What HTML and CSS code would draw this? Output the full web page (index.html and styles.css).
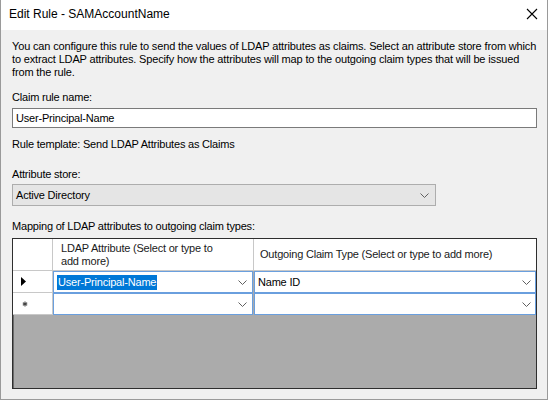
FILE: index.html
```html
<!DOCTYPE html>
<html>
<head>
<meta charset="utf-8">
<link rel="stylesheet" href="styles.css">
</head>
<body>
<div class="window">
  <div class="titlebar">
    <span class="title">Edit Rule - SAMAccountName</span>
    <svg class="close" width="12" height="12" viewBox="0 0 12 12"><path d="M1 1 L11 11 M11 1 L1 11" stroke="#000" stroke-width="1.1" fill="none"/></svg>
  </div>
  <div class="content">
    <p class="desc">You can configure this rule to send the values of LDAP attributes as claims. Select an attribute store from which<br>to extract LDAP attributes. Specify how the attributes will map to the outgoing claim types that will be issued<br>from the rule.</p>
    <div class="lbl lbl-claim">Claim rule name:</div>
    <div class="textbox">User-Principal-Name</div>
    <div class="lbl lbl-template">Rule template: Send LDAP Attributes as Claims</div>
    <div class="lbl lbl-store">Attribute store:</div>
    <div class="combo">
      <span>Active Directory</span>
      <svg class="chev" width="9" height="5" viewBox="0 0 9 5"><path d="M0.5 0.5 L4.5 4.5 L8.5 0.5" stroke="#606060" fill="none"/></svg>
    </div>
    <div class="lbl lbl-map">Mapping of LDAP attributes to outgoing claim types:</div>
    <div class="grid">
      <div class="corner"></div>
      <div class="hcell h1">LDAP Attribute (Select or type to<br>add more)</div>
      <div class="hcell h2">Outgoing Claim Type (Select or type to add more)</div>

      <div class="rowhead">
        <svg width="5" height="9" viewBox="0 0 5 9"><path d="M0 0 L5 4.5 L0 9 Z" fill="#000"/></svg>
      </div>
      <div class="cell c1"><span class="sel">User-Principal-Name</span><svg class="chev" width="9" height="5" viewBox="0 0 9 5"><path d="M0.5 0.5 L4.5 4.5 L8.5 0.5" stroke="#606060" fill="none"/></svg></div>
      <div class="cell c2"><span class="val">Name ID</span><svg class="chev" width="9" height="5" viewBox="0 0 9 5"><path d="M0.5 0.5 L4.5 4.5 L8.5 0.5" stroke="#606060" fill="none"/></svg></div>

      <div class="rowhead">
        <svg class="star" width="6" height="6" viewBox="0 0 6 6"><path d="M3 0.5 L3 5.5 M0.8 1.7 L5.2 4.3 M5.2 1.7 L0.8 4.3" stroke="#444" stroke-width="1.1" fill="none"/></svg>
      </div>
      <div class="cell c1"><span></span><svg class="chev" width="9" height="5" viewBox="0 0 9 5"><path d="M0.5 0.5 L4.5 4.5 L8.5 0.5" stroke="#606060" fill="none"/></svg></div>
      <div class="cell c2"><span></span><svg class="chev" width="9" height="5" viewBox="0 0 9 5"><path d="M0.5 0.5 L4.5 4.5 L8.5 0.5" stroke="#606060" fill="none"/></svg></div>
    </div>
  </div>
</div>
</body>
</html>
```

FILE: styles.css
```css
* { box-sizing: border-box; }
html, body { margin: 0; padding: 0; }
body {
  font-family: "Liberation Sans", Arial, sans-serif;
  font-size: 11px;
  color: #000;
  background: #fff;
}
.window {
  width: 548px;
  height: 400px;
  border: 1px solid #9a9a9a;
  border-top: none;
  background: #f0f0f0;
  display: flex;
  flex-direction: column;
}
.titlebar {
  height: 30px;
  background: #fff;
  display: flex;
  align-items: center;
  justify-content: space-between;
  padding: 0 8px 2px 8px;
}
.title {
  font-family: "Liberation Sans", Arial, sans-serif;
  font-size: 12px;
  color: #000;
}
.close { margin-right: 1px; }
.content {
  padding: 10px 10px 0 11px;
  display: flex;
  flex-direction: column;
}
.desc {
  margin: 0;
  line-height: 13px;
  letter-spacing: -0.15px;
}
.lbl {
  line-height: 13px;
  letter-spacing: -0.2px;
}
.lbl-claim { margin-top: 12px; }
.lbl-template { margin-top: 10px; }
.lbl-store { margin-top: 17px; }
.lbl-map { margin-top: 14px; }
.textbox {
  margin-top: 4px;
  height: 20px;
  border: 1px solid #7a7a7a;
  background: #fff;
  padding: 0 3px;
  display: flex;
  align-items: center;
  letter-spacing: -0.2px;
}
.combo {
  margin-top: 3px;
  width: 424px;
  height: 22px;
  border: 1px solid #adadad;
  background: #e5e5e5;
  display: flex;
  align-items: center;
  justify-content: space-between;
  padding: 0 6px 0 3px;
  letter-spacing: -0.2px;
}
.grid {
  margin-top: 5px;
  height: 151px;
  border: 1px solid #2e2e2e;
  box-shadow: inset 1px 1px 0 #6a6a6a;
  background: #ababab;
  display: grid;
  grid-template-columns: 40px 201px 1fr;
  grid-template-rows: 32px 22px 22px 1fr;
}
.corner, .hcell, .rowhead {
  background: #fff;
  border-right: 1px solid #c8c8c8;
  border-bottom: 1px solid #c8c8c8;
}
.hcell {
  display: flex;
  align-items: center;
  line-height: 13px;
  letter-spacing: -0.2px;
  color: #1a1a1a;
}
.h1 { padding-left: 8px; }
.h2 { padding-left: 6px; border-right: none; }
.rowhead {
  display: flex;
  align-items: center;
  padding-left: 8px;
}
.star { margin-left: 1px; }
.cell {
  background: #fff;
  border: 1px solid #6a9fde;
  display: flex;
  align-items: center;
  justify-content: space-between;
  letter-spacing: -0.2px;
}
.c1 { padding: 0 5px 0 3px; margin-right: 1px; }
.c2 { padding: 0 4px 0 3px; }
.sel {
  background: #0078d7;
  color: #fff;
  line-height: 15px;
  padding: 0 1px;
}
```
